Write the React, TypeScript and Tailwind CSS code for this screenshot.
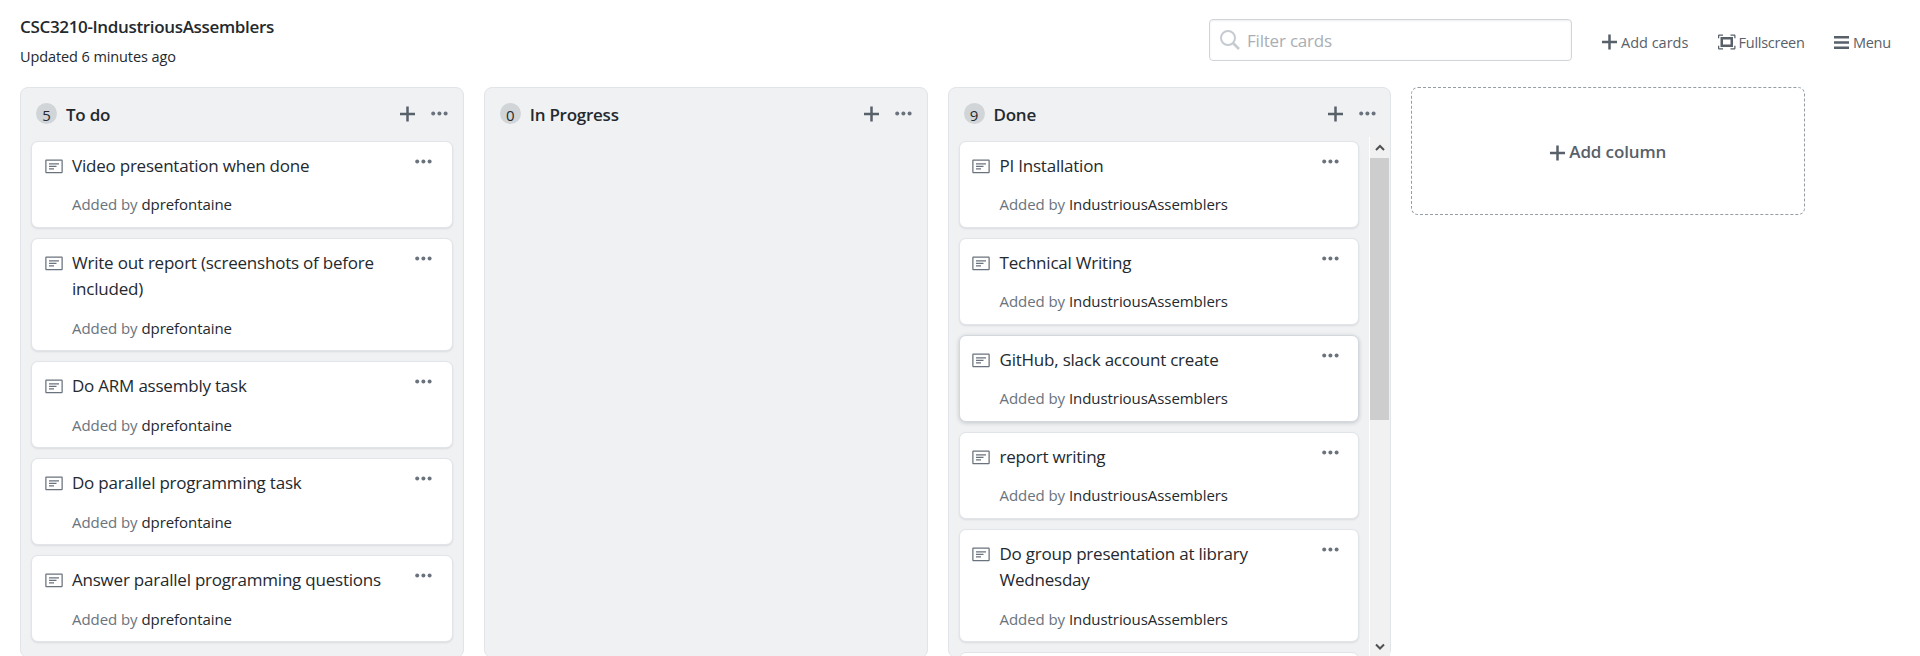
import React from "react";

const ink = "text-[#24292e]";

function Plus({ className = "" }: { className?: string }) {
  return (
    <svg className={"block shrink-0 " + className} width="15" height="20" viewBox="0 0 12 16" fill="currentColor">
      <path fillRule="evenodd" d="M12 9H7v5H5V9H0V7h5V2h2v5h5v2z" />
    </svg>
  );
}

function Dots() {
  return (
    <svg className="block shrink-0" width="17" height="5" viewBox="0 0 17 5" fill="#6a737d">
      <circle cx="2.2" cy="2.5" r="2" />
      <circle cx="8.4" cy="2.5" r="2" />
      <circle cx="14.6" cy="2.5" r="2" />
    </svg>
  );
}

function NoteIcon() {
  return (
    <svg className="block shrink-0" width="18" height="20" viewBox="0 0 14 16" fill="#6a737d">
      <path fillRule="evenodd" d="M3 10h4V9H3v1zm0-2h6V7H3v1zm0-2h8V5H3v1zm10 6H1V3h12v9zM1 2c-.55 0-1 .45-1 1v9c0 .55.45 1 1 1h12c.55 0 1-.45 1-1V3c0-.55-.45-1-1-1H1z" />
    </svg>
  );
}

interface CardData {
  title: string;
  lines?: string[];
  lifted?: boolean;
}

function Card({ card, author }: { card: CardData; author: string }) {
  return (
    <article
      className={
        "flex shrink-0 rounded-[7px] border bg-white pl-[12.5px] pr-[19.5px] " +
        (card.lifted
          ? "border-[#d3d8de] shadow-[0_1px_4px_rgba(27,31,35,0.2)]"
          : "border-[#e1e4e8] shadow-[0_1px_2px_rgba(27,31,35,0.1)]")
      }
    >
      <div className="pt-[14.5px]">
        <NoteIcon />
      </div>
      <div className="min-w-0 flex-1 pb-[11px] pl-[9.5px] pt-[11px]">
        <h4 className={"whitespace-nowrap text-[17px] leading-[26.25px] tracking-[-0.22px] " + ink}>
          {(card.lines ?? [card.title]).map((l) => (
            <span key={l} className="block">{l}</span>
          ))}
        </h4>
        <p className={"mt-[14px] whitespace-nowrap text-[15px] leading-[22.75px] tracking-[-0.06px] " + ink}>
          <span className="text-[#6a737d]">Added by</span> {author}
        </p>
      </div>
      <div className="pt-[17px]">
        <Dots />
      </div>
    </article>
  );
}

function Column({ name, count, children }: { name: string; count: number; children?: React.ReactNode }) {
  return (
    <section className="flex h-[571px] w-[443.75px] shrink-0 flex-col rounded-[8px] border border-[#e1e4e8] bg-[#eff1f3]">
      <header className="flex h-[49px] shrink-0 items-center pl-[15px] pr-[14.5px] pt-[2px]">
        <span className={"flex h-[21px] w-[21px] items-center justify-center rounded-full bg-[#d1d5d8] pt-[2px] text-[15px] leading-5 tracking-[-0.3px] " + ink}>
          {count}
        </span>
        <h3 className={"flex-1 pl-[9px] pt-[3px] text-[17px] font-semibold leading-[26px] tracking-[-0.25px] " + ink}>{name}</h3>
        <Plus className="text-[#586069]" />
        <div className="w-4" />
        <Dots />
      </header>
      {children}
    </section>
  );
}

function Scrollbar() {
  return (
    <div className="flex w-[21px] shrink-0 flex-col border-l border-white bg-[#f1f1f1]">
      <div className="flex h-[21px] items-center justify-center pr-px">
        <svg width="10" height="8" viewBox="0 0 10 8" fill="none" stroke="#505050" strokeWidth="2">
          <path d="M1 6 5 2 9 6" />
        </svg>
      </div>
      <div className="mr-px h-[262px] bg-[#cdcdcd]" />
      <div className="flex-1" />
      <div className="flex h-[21px] items-center justify-center pr-px">
        <svg width="10" height="8" viewBox="0 0 10 8" fill="none" stroke="#505050" strokeWidth="2">
          <path d="M1 1.5 5 5.5 9 1.5" />
        </svg>
      </div>
    </div>
  );
}

const todo: CardData[] = [
  { title: "Video presentation when done" },
  { title: "Write out report", lines: ["Write out report (screenshots of before", "included)"] },
  { title: "Do ARM assembly task" },
  { title: "Do parallel programming task" },
  { title: "Answer parallel programming questions" },
];

const done: CardData[] = [
  { title: "PI Installation" },
  { title: "Technical Writing" },
  { title: "GitHub, slack account create", lifted: true },
  { title: "report writing" },
  { title: "Do group presentation", lines: ["Do group presentation at library", "Wednesday"] },
];

export default function App() {
  return (
    <div className="flex h-[656px] w-[1920px] flex-col overflow-hidden bg-white font-['Open_Sans',sans-serif]">
      <header className="flex h-[87px] shrink-0 justify-between pl-5 pr-[29px]">
        <div className="pt-[14px]">
          <h1 className={"text-[17px] font-semibold leading-[26px] tracking-[-0.34px] " + ink}>CSC3210-IndustriousAssemblers</h1>
          <p className={"mt-[5px] text-[14.5px] leading-[23px] tracking-[-0.1px] " + ink}>Updated 6 minutes ago</p>
        </div>
        <div className="flex pt-[19px] text-[14.5px] text-[#586069]">
          <div className="flex h-[42px] w-[363px] shrink-0 items-center rounded-[4px] border border-[#d1d5da] pl-[10px] text-[17px] tracking-[-0.2px] text-[#a9aeb4] shadow-[inset_0_1px_2px_rgba(27,31,35,0.075)]">
            <svg width="20" height="20" viewBox="0 0 20 20" fill="none" stroke="#c6cbd1" strokeWidth="2">
              <circle cx="8" cy="8" r="7" />
              <path d="m13 13 6 6" strokeWidth="2.6" />
            </svg>
            <span className="pl-[7px] pt-px">Filter cards</span>
          </div>
          <nav className="flex h-[46px] items-center whitespace-nowrap">
            <a className="ml-[30px] flex w-[87px] items-center gap-[4px]"><Plus /><span className="pt-[2px]">Add cards</span></a>
            <a className="ml-[29px] flex w-[87px] items-center gap-[3px] tracking-[-0.25px]">
              <svg className="shrink-0" width="17.5" height="20" viewBox="0 0 14 16" fill="currentColor">
                <path fillRule="evenodd" d="M0 5V3c0-.55.45-1 1-1h3v1H1v2H0zm10-3h3c.55 0 1 .45 1 1v2h-1V3h-3V2zm3 9h1v2c0 .55-.45 1-1 1h-3v-1h3v-2zM1 11H0v2c0 .55.45 1 1 1h3v-1H1v-2zM2 4h10v8H2V4zm2 6h6V6H4v4z" />
              </svg>
              <span className="pt-[2px]">Fullscreen</span>
            </a>
            <a className="ml-[29px] flex w-[57px] items-center gap-[4px] tracking-[-0.3px]">
              <svg className="shrink-0" width="15" height="13" viewBox="0 0 15 13" fill="currentColor">
                <path d="M0 0h15v2.5H0zM0 5.2h15v2.5H0zM0 10.4h15v2.5H0z" />
              </svg>
              <span className="pt-[2px]">Menu</span>
            </a>
          </nav>
        </div>
      </header>
      <main className="flex gap-5 pl-5">
        <Column name="To do" count={5}>
          <div className="flex flex-col gap-[10px] px-[10px] pt-[4px]">
            {todo.map((c) => <Card key={c.title} card={c} author="dprefontaine" />)}
          </div>
        </Column>
        <Column name="In Progress" count={0} />
        <Column name="Done" count={9}>
          <div className="flex h-[520px] overflow-hidden">
            <div className="flex min-w-0 flex-1 flex-col gap-[10px] overflow-hidden pl-[10px] pr-[10px] pt-[4px]">
              {done.map((c) => <Card key={c.title} card={c} author="IndustriousAssemblers" />)}
              <article className="h-[87px] shrink-0 rounded-[7px] border border-[#e1e4e8] bg-white" />
            </div>
            <Scrollbar />
          </div>
        </Column>
        <button className="flex h-[128px] w-[394px] shrink-0 items-center justify-center gap-1 rounded-[7px] border border-dashed border-[#959da5] pt-px text-[17px] font-semibold tracking-[-0.13px] text-[#586069]">
          <Plus className="translate-y-px" />
          <span>Add column</span>
        </button>
      </main>
    </div>
  );
}
